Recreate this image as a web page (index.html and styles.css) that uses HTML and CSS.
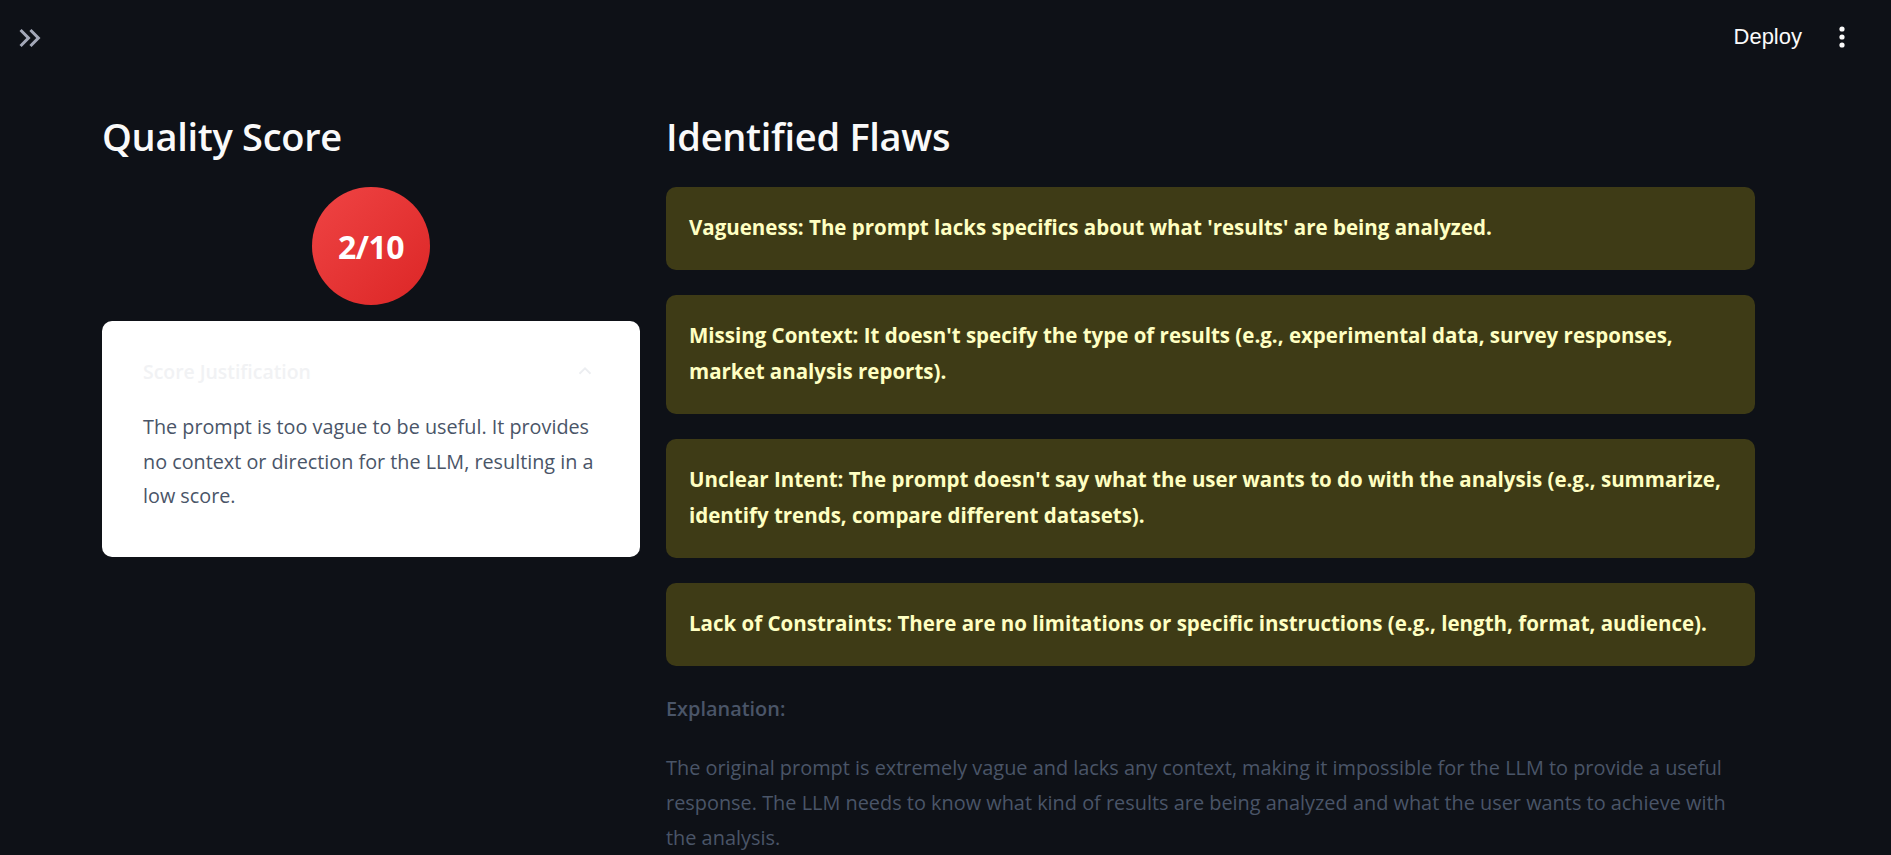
FILE: index.html
```html
<!DOCTYPE html>
<html lang="en">
<head>
<meta charset="utf-8">
<title>Prompt Quality</title>
<link rel="stylesheet" href="styles.css">
</head>
<body>
<header class="topbar">
  <button class="sidebar-toggle" aria-label="Open sidebar">
    <svg viewBox="0 0 24 24" width="36" height="36"><path fill="currentColor" d="M6.41 6L5 7.41 9.58 12 5 16.59 6.41 18l6-6z"/><path fill="currentColor" d="M13 6l-1.41 1.41L16.17 12l-4.58 4.59L13 18l6-6z"/></svg>
  </button>
  <div class="toolbar">
    <span class="deploy">Deploy</span>
    <span class="kebab" aria-label="Main menu">
      <svg viewBox="0 0 6 22" width="6" height="22"><circle cx="3" cy="3" r="2.6" fill="currentColor"/><circle cx="3" cy="11" r="2.6" fill="currentColor"/><circle cx="3" cy="19" r="2.6" fill="currentColor"/></svg>
    </span>
  </div>
</header>
<main class="main">
  <div class="columns">
    <section class="col">
      <h2 class="heading">Quality Score</h2>
      <div class="score-wrap">
        <div class="score-circle">2/10</div>
      </div>
      <div class="expander">
        <div class="expander-head">
          <span class="expander-title">Score Justification</span>
          <svg class="expander-chevron" viewBox="0 0 24 24" width="22" height="22"><path fill="none" stroke="currentColor" stroke-width="2" d="M6 15l6-6 6 6"/></svg>
        </div>
        <p class="expander-body">The prompt is too vague to be useful. It provides no context or direction for the LLM, resulting in a low score.</p>
      </div>
    </section>
    <section class="col">
      <h2 class="heading">Identified Flaws</h2>
      <div class="flaw">Vagueness: The prompt lacks specifics about what 'results' are being analyzed.</div>
      <div class="flaw">Missing Context: It doesn't specify the type of results (e.g., experimental data, survey responses, market analysis reports).</div>
      <div class="flaw">Unclear Intent: The prompt doesn't say what the user wants to do with the analysis (e.g., summarize, identify trends, compare different datasets).</div>
      <div class="flaw">Lack of Constraints: There are no limitations or specific instructions (e.g., length, format, audience).</div>
      <p class="expl-title">Explanation:</p>
      <p class="expl">The original prompt is extremely vague and lacks any context, making it impossible for the LLM to provide a useful response. The LLM needs to know what kind of results are being analyzed and what the user wants to achieve with the analysis.</p>
    </section>
  </div>
</main>
</body>
</html>
```
FILE: styles.css
```css
* { box-sizing: border-box; }
html, body { margin: 0; padding: 0; }
body {
  background: #0e1117;
  color: #fafafa;
  font-family: "Open Sans", "Noto Sans", sans-serif;
  width: 1891px;
  height: 855px;
  overflow: hidden;
}
.topbar {
  height: 74px;
  display: flex;
  align-items: center;
  justify-content: space-between;
  padding: 0 46px 0 12px;
}
.sidebar-toggle {
  background: none;
  border: 0;
  padding: 0;
  color: #a3a8b8;
  display: flex;
  margin-top: 1px;
}
.toolbar {
  display: flex;
  align-items: center;
  gap: 37px;
}
.deploy {
  font-family: "Liberation Sans", Arial, sans-serif;
  font-size: 22px;
  color: #fafafa;
}
.kebab { color: #fafafa; display: flex; }
.main {
  padding: 35px 0 0 102px;
}
.columns {
  display: grid;
  grid-template-columns: 538px 1089px;
  column-gap: 26px;
  align-items: start;
}
.heading {
  margin: 0 0 24px;
  font-size: 38px;
  line-height: 54px;
  font-weight: 600;
  color: #fafafa;
  letter-spacing: -0.3px;
}
.score-wrap {
  display: flex;
  justify-content: center;
  margin-bottom: 16px;
}
.score-circle {
  width: 118px;
  height: 118px;
  border-radius: 50%;
  background: linear-gradient(135deg, #ef4444, #dc2626);
  display: flex;
  align-items: center;
  justify-content: center;
  font-size: 32px;
  font-weight: 700;
  color: #fff;
  letter-spacing: -0.5px;
}
.expander {
  background: #fff;
  border-radius: 10px;
  padding: 34px 34px 43px 41px;
}
.expander-head {
  display: flex;
  justify-content: space-between;
  align-items: center;
  height: 32px;
  margin-bottom: 23px;
  padding-right: 10px;
}
.expander-title {
  font-size: 19.4px;
  font-weight: 600;
  color: #f1f2f4;
}
.expander-chevron { color: #eceef1; }
.expander-body {
  margin: 0;
  font-size: 19.8px;
  line-height: 34.5px;
  color: #4a5568;
}
.flaw {
  background: #3e3b16;
  color: #ffffc2;
  border-radius: 10px;
  padding: 22px 23px 25px;
  font-size: 20.5px;
  line-height: 36px;
  font-weight: 700;
  margin-bottom: 25px;
}
.expl-title {
  margin: 25px 0 23px;
  font-size: 19.9px;
  line-height: 36px;
  font-weight: 600;
  color: #4a5568;
}
.expl {
  margin: 0;
  font-size: 19.9px;
  line-height: 35px;
  color: #4a5568;
}
```
